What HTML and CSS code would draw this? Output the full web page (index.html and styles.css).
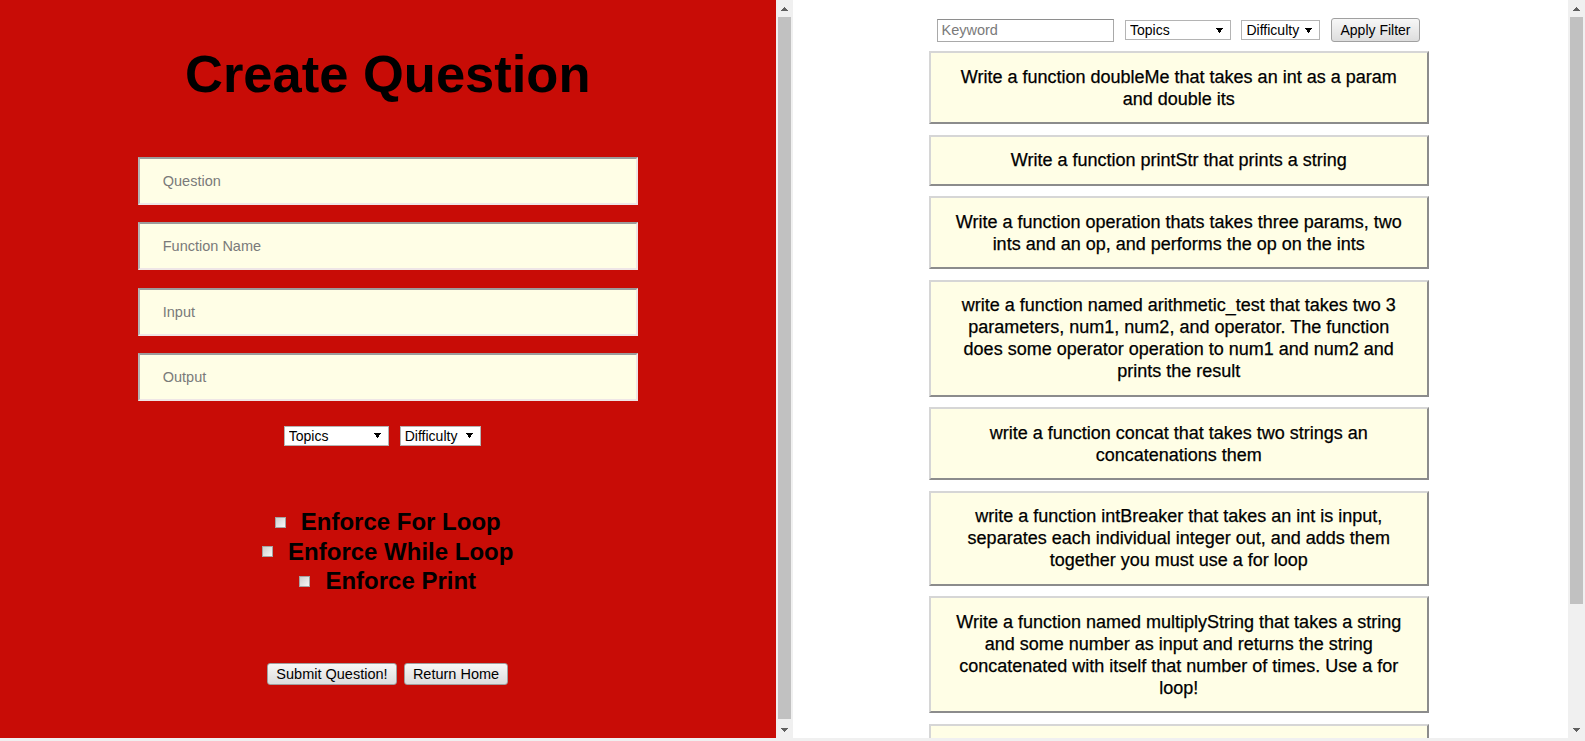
FILE: index.html
```html
<!DOCTYPE html>
<html lang="en">
<head>
<meta charset="utf-8">
<title>Create Question</title>
<link rel="stylesheet" href="styles.css">
</head>
<body>
<div class="page">
  <section class="panel panel-left">
    <div class="panel-body">
      <div class="create">
        <h1 class="title">Create Question</h1>
        <form class="qform">
          <div class="fields">
            <input class="field" type="text" placeholder="Question">
            <input class="field" type="text" placeholder="Function Name">
            <input class="field" type="text" placeholder="Input">
            <input class="field" type="text" placeholder="Output">
          </div>
          <div class="selects">
            <select class="sel sel-topics"><option>Topics</option></select>
            <select class="sel sel-diff"><option>Difficulty</option></select>
          </div>
          <div class="checks">
            <label class="check"><input type="checkbox" class="cb">Enforce For Loop</label>
            <label class="check"><input type="checkbox" class="cb">Enforce While Loop</label>
            <label class="check"><input type="checkbox" class="cb">Enforce Print</label>
          </div>
          <div class="actions">
            <button type="button" class="btn">Submit Question!</button>
            <button type="button" class="btn">Return Home</button>
          </div>
        </form>
      </div>
    </div>
    <div class="vscroll" aria-hidden="true">
      <div class="vscroll-btn vscroll-up"></div>
      <div class="vscroll-track"><div class="vscroll-thumb thumb-left"></div></div>
      <div class="vscroll-btn vscroll-down"></div>
    </div>
  </section>
  <section class="panel panel-right">
    <div class="panel-body">
      <div class="browse">
        <div class="filter">
          <input class="kw" type="text" placeholder="Keyword">
          <select class="sel sel-topics-r"><option>Topics</option></select>
          <select class="sel sel-diff-r"><option>Difficulty</option></select>
          <button type="button" class="btn btn-apply">Apply Filter</button>
        </div>
        <div class="list">
          <div class="card">Write a function doubleMe that takes an int as a param and double its</div>
          <div class="card">Write a function printStr that prints a string</div>
          <div class="card">Write a function operation thats takes three params, two ints and an op, and performs the op on the ints</div>
          <div class="card">write a function named arithmetic_test that takes two 3 parameters, num1, num2, and operator. The function does some operator operation to num1 and num2 and prints the result</div>
          <div class="card">write a function concat that takes two strings an concatenations them</div>
          <div class="card">write a function intBreaker that takes an int is input, separates each individual integer out, and adds them together you must use a for loop</div>
          <div class="card">Write a function named multiplyString that takes a string and some number as input and returns the string concatenated with itself that number of times. Use a for loop!</div>
          <div class="card card-partial"></div>
        </div>
      </div>
    </div>
    <div class="vscroll" aria-hidden="true">
      <div class="vscroll-btn vscroll-up"></div>
      <div class="vscroll-track"><div class="vscroll-thumb thumb-right"></div></div>
      <div class="vscroll-btn vscroll-down"></div>
    </div>
  </section>
</div>
</body>
</html>
```

FILE: styles.css
```css
* {
  box-sizing: border-box;
}

html,
body {
  margin: 0;
  height: 100%;
}

body {
  background: #f0f0f0;
  font-family: "Liberation Sans", Arial, sans-serif;
  overflow: hidden;
}

.page {
  display: flex;
  height: 738px;
}

.panel {
  flex: 1 1 0;
  min-width: 0;
  display: flex;
}

.panel-body {
  flex: 1 1 auto;
  min-width: 0;
  overflow: hidden;
}

.panel-left .panel-body {
  background: #c80c06;
}

.panel-right .panel-body {
  background: #ffffff;
}

/* drawn scrollbars */
.vscroll {
  flex: 0 0 17px;
  display: flex;
  flex-direction: column;
  background: #f0f0f0;
}

.vscroll-btn {
  flex: 0 0 17px;
  background-repeat: no-repeat;
  background-position: center;
  background-size: 7px 4px;
}

.vscroll-up {
  background-image: conic-gradient(from 138.8deg at 50% 0, #606060 0deg 82.4deg, transparent 82.4deg);
}

.vscroll-down {
  background-image: conic-gradient(from -41.2deg at 50% 100%, #606060 0deg 82.4deg, transparent 82.4deg);
}

.vscroll-track {
  flex: 1 1 auto;
  display: flex;
  flex-direction: column;
  padding: 0 2px;
}

.vscroll-thumb {
  background: #c1c1c1;
}

.thumb-left {
  height: 702px;
}

.thumb-right {
  height: 587px;
}

/* left: create question */
.create {
  display: flex;
  flex-direction: column;
  align-items: center;
  padding: 44px 0 56px;
}

.title {
  margin: 0;
  font-size: 52.5px;
  line-height: 60px;
  font-weight: bold;
  color: #000;
}

.qform {
  display: flex;
  flex-direction: column;
  align-items: center;
  margin: 53px 0 0;
  width: 100%;
}

.fields {
  display: flex;
  flex-direction: column;
  gap: 17.4px;
}

.field {
  width: 500px;
  height: 48px;
  margin: 0;
  padding: 0 23px;
  border: 2px solid;
  border-color: #9c9c9c #efe6e6 #efe6e6 #b4b4b4;
  background: #fffee6;
  font-family: "Liberation Sans", Arial, sans-serif;
  font-size: 14.5px;
  color: #000;
  outline: none;
}

.field::placeholder,
.kw::placeholder {
  color: #7a7a7a;
}

.selects {
  display: flex;
  gap: 11px;
  margin-top: 24.8px;
  padding-right: 11px;
}

.sel {
  appearance: none;
  -webkit-appearance: none;
  height: 20px;
  margin: 0;
  padding: 0 0 0 4px;
  border: 1px solid #b4b4b4;
  border-radius: 0;
  background: conic-gradient(from -35deg at 50% 100%, #000 0deg 70deg, transparent 70deg) right 7px center / 7px 5px no-repeat, #ffffff;
  font-family: "Liberation Sans", Arial, sans-serif;
  font-size: 14px;
  color: #000;
  outline: none;
}

.sel-topics {
  width: 105px;
}

.sel-diff {
  width: 81px;
}

.checks {
  display: flex;
  flex-direction: column;
  align-items: center;
  margin-top: 61.5px;
}

.check {
  display: flex;
  align-items: center;
  height: 29.5px;
  font-size: 24px;
  font-weight: bold;
  color: #000;
}

.cb {
  appearance: none;
  -webkit-appearance: none;
  width: 11px;
  height: 11px;
  margin: 0 15px 0 0;
  border: 1px solid #a4a4a4;
  background: linear-gradient(135deg, #cfcfcf, #f7f7f7);
}

.actions {
  display: flex;
  gap: 7.3px;
  margin-top: 67px;
}

.btn {
  height: 22px;
  margin: 0;
  padding: 0 8px;
  border: 1px solid #a0a0a0;
  border-radius: 3px;
  background: linear-gradient(#f7f7f7, #dddddd);
  font-family: "Liberation Sans", Arial, sans-serif;
  font-size: 14.5px;
  color: #000;
}

/* right: question list */
.browse {
  display: flex;
  flex-direction: column;
  align-items: center;
  padding: 18px 3px 5px 0;
}

.filter {
  display: flex;
  align-items: center;
  gap: 10.5px;
  height: 24px;
}

.kw {
  width: 177px;
  height: 23px;
  margin: 0;
  padding: 0 3px;
  border: 1px solid #a9a9a9;
  border-top-color: #8e8e8e;
  background: #fff;
  font-family: "Liberation Sans", Arial, sans-serif;
  font-size: 14.5px;
  outline: none;
}

.sel-topics-r {
  width: 106px;
}

.sel-diff-r {
  width: 79px;
}

.btn-apply {
  height: 24px;
  padding: 0 8.5px;
  font-size: 14px;
}

.list {
  display: flex;
  flex-direction: column;
  gap: 10.5px;
  width: 500px;
  margin-top: 9px;
}

.card {
  padding: 12.5px 20px;
  border: 2px solid;
  border-color: #d6d6d6 #8c8c8c #8c8c8c #d6d6d6;
  background: #fffee6;
  text-align: center;
  font-size: 18px;
  line-height: 22px;
  color: #000;
  -webkit-text-stroke: 0.25px #000;
}

.card-partial {
  min-height: 73px;
}
```
